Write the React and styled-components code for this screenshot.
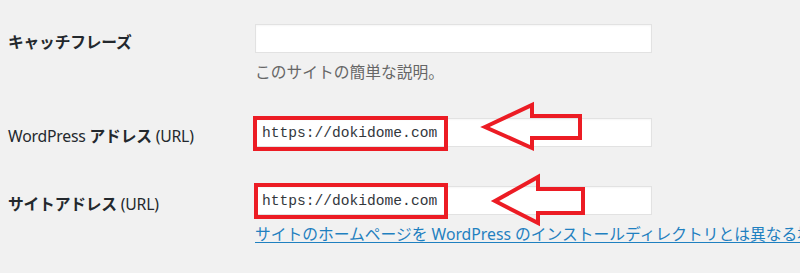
import React from "react";
import styled, { createGlobalStyle } from "styled-components";

const Global = createGlobalStyle`
  html, body { margin: 0; padding: 0; background: #f1f1f1; overflow: hidden; }
  body { width: 800px; height: 273px; }
`;

const Page = styled.div`
  padding: 24px 0 0 8px;
  font-family: "Noto Sans", "Noto Sans CJK JP", sans-serif;
  font-size: 15.75px;
  color: #23282d;
  white-space: nowrap;
`;

const Row = styled.div`
  display: grid;
  grid-template-columns: 247px 1fr;
  margin-top: ${(p) => p.$gap || 0}px;
`;

const Label = styled.div`
  padding-top: 8px;
  line-height: 20px;
  font-weight: 700;
  letter-spacing: -0.2px;
`;

const Latin = styled.span`
  font-weight: 400;
`;

const Field = styled.div`
  position: relative;
  min-width: 0;
`;

const Input = styled.div`
  box-sizing: border-box;
  width: 397px;
  height: 29px;
  background: #fff;
  border: 1px solid #e2e2e2;
  box-shadow: inset 0 1px 2px rgba(0, 0, 0, 0.04);
  display: flex;
  align-items: center;
  padding: 0 6px;
  font-family: "Liberation Mono", "DejaVu Sans Mono", monospace;
  font-size: 14.6px;
  color: #32373c;
`;

const Description = styled.div`
  margin-top: 9px;
  line-height: 20px;
  color: #666;
`;

const Link = styled.a`
  display: block;
  margin-top: 9px;
  line-height: 20px;
  color: #1f80c0;
  text-decoration: underline;
  text-underline-offset: 2px;
  overflow: hidden;
`;

const RedBox = styled.div`
  position: absolute;
  left: ${(p) => p.$l}px;
  top: ${(p) => p.$t}px;
  width: ${(p) => p.$w}px;
  height: ${(p) => p.$h}px;
  box-sizing: border-box;
  border: 4px solid #ec1c24;
  pointer-events: none;
`;

const ArrowSvg = styled.svg`
  position: absolute;
  left: ${(p) => p.$l}px;
  top: ${(p) => p.$t}px;
  overflow: visible;
`;

function Arrow({ l, t, w, h, points }) {
  return (
    <ArrowSvg $l={l} $t={t} width={w} height={h} viewBox={`0 0 ${w} ${h}`}>
      <polygon
        points={points}
        fill="none"
        stroke="#ec1c24"
        strokeWidth="4"
        strokeLinejoin="miter"
        strokeMiterlimit="10"
      />
    </ArrowSvg>
  );
}

export default function App() {
  return (
    <>
      <Global />
      <Page>
        <Row>
          <Label>キャッチフレーズ</Label>
          <Field>
            <Input />
            <Description>このサイトの簡単な説明。</Description>
          </Field>
        </Row>
        <Row $gap={36}>
          <Label>
            <Latin>WordPress</Latin> アドレス <Latin>(URL)</Latin>
          </Label>
          <Field>
            <Input>https://dokidome.com</Input>
            <RedBox $l={-2} $t={-2} $w={195} $h={35} />
            <Arrow
              l={226}
              t={-17}
              w={104}
              h={52}
              points="4,26 51,4 51,15 99,15 99,37 51,37 51,47"
            />
          </Field>
        </Row>
        <Row $gap={39}>
          <Label>
            サイトアドレス <Latin>(URL)</Latin>
          </Label>
          <Field>
            <Input>https://dokidome.com</Input>
            <RedBox $l={-1} $t={-3} $w={194} $h={36} />
            <Arrow
              l={236}
              t={-13}
              w={100}
              h={56}
              points="4,28 47,4 47,16 92,16 92,40 47,40 47,50"
            />
            <Link href="#">
              サイトのホームページを WordPress のインストールディレクトリとは異なる場所にしたい場合は、ここにアドレスを入力してください。
            </Link>
          </Field>
        </Row>
      </Page>
    </>
  );
}
